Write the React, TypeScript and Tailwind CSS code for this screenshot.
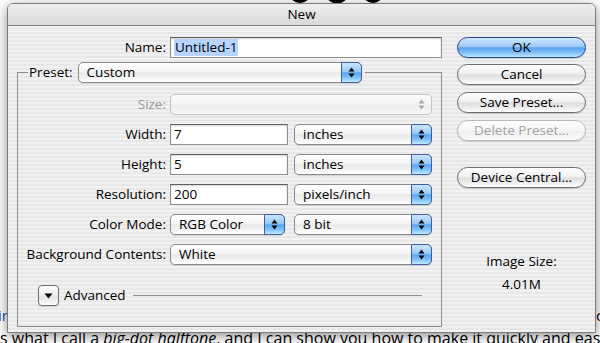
import React from "react";

const Arrows = ({ color = "#000" }: { color?: string }) => (
  <svg width="7" height="11" viewBox="0 0 7 11" fill={color}>
    <path d="M3.5 0.5L6.5 4.5H0.5Z" />
    <path d="M0.5 6.5H6.5L3.5 10.5Z" />
  </svg>
);

type PopUpProps = { value?: string; className: string; disabled?: boolean };

const PopUp = ({ value = "", className, disabled }: PopUpProps) =>
  disabled ? (
    <div
      className={`flex h-[21px] items-center justify-end rounded-[5px] border border-[#c3c3c3] bg-[linear-gradient(180deg,#fbfbfb_0%,#f2f2f2_50%,#ececec_52%,#f8f8f8_100%)] pr-[6px] ${className}`}
    >
      <Arrows color="#a9a9a9" />
    </div>
  ) : (
    <div
      className={`flex h-[21px] items-stretch rounded-[5px] border border-[#8b8b8b] bg-[linear-gradient(180deg,#ffffff_0%,#f4f4f4_45%,#e9e9e9_52%,#f3f3f3_78%,#ffffff_100%)] shadow-[0_1px_1px_rgba(0,0,0,0.12)] ${className}`}
    >
      <span className="flex-1 truncate pl-[8px] leading-[19px]">{value}</span>
      <span className="-my-px -mr-px flex w-[21px] items-center justify-center rounded-r-[5px] border border-[#3d5fa6] bg-[linear-gradient(180deg,#cde6fc_0%,#97c9f6_45%,#5aa7f1_52%,#7cc0fa_76%,#c2ebff_100%)]">
        <Arrows />
      </span>
    </div>
  );

const Field = ({ className, children }: { className: string; children?: React.ReactNode }) => (
  <div
    className={`flex h-[21px] items-center border border-[#8f8f8f] border-t-[#5f5f5f] bg-white pl-[3px] shadow-[inset_0_1px_2px_rgba(0,0,0,0.18)] ${className}`}
  >
    {children}
  </div>
);

const buttonStyles = {
  normal:
    "border-[#6d6d6d] bg-[linear-gradient(180deg,#fdfdfd_0%,#f1f1f1_45%,#dedede_52%,#ececec_75%,#fdfdfd_100%)] text-black",
  primary:
    "border-[#27478f] bg-[linear-gradient(180deg,#d0e8fd_0%,#9ccbf6_45%,#58a2ef_52%,#7dbcf7_75%,#bde6ff_100%)] text-black",
  disabled:
    "border-[#b9b9b9] bg-[linear-gradient(180deg,#fdfdfd_0%,#f6f6f6_50%,#efefef_52%,#fafafa_100%)] text-[#a3a3a3]",
};

const AquaButton = ({
  label,
  kind = "normal",
  className = "",
}: {
  label: string;
  kind?: keyof typeof buttonStyles;
  className?: string;
}) => (
  <div
    className={`flex h-[21px] items-center justify-center rounded-full border shadow-[0_1px_1px_rgba(0,0,0,0.15)] ${buttonStyles[kind]} ${className}`}
  >
    {label}
  </div>
);

const Row = ({ label, muted, children }: { label: string; muted?: boolean; children: React.ReactNode }) => (
  <div className="flex h-[21px] items-center gap-[4px]">
    <span className={`w-[148px] text-right ${muted ? "text-[#9a9a9a]" : ""}`}>{label}</span>
    {children}
  </div>
);

export default function App() {
  return (
    <div className="relative h-[343px] w-[600px] overflow-hidden bg-white font-['Open_Sans',sans-serif] text-[13.5px] font-medium text-black">
      {/* page content behind the dialog */}
      <svg className="absolute left-0 top-0" width="600" height="10">
        <ellipse cx="300" cy="-6" rx="10.5" ry="9" fill="#000" />
        <ellipse cx="337" cy="-6" rx="11" ry="9.5" fill="#000" />
        <ellipse cx="373" cy="-6" rx="10" ry="9" fill="#000" />
      </svg>
      <span className="absolute left-[-2px] top-[308px] text-[15px] leading-[15px] font-normal text-[#1f4a9e]">ir</span>
      <span className="absolute left-[596px] top-[308px] text-[15px] leading-[15px] font-normal">c</span>
      <p className="absolute left-0 top-[330px] whitespace-nowrap text-[16px] leading-[16px] font-normal">
        s what I call a <em>big-dot halftone</em>, and I can show you how to make it quickly and eas
      </p>

      {/* dialog */}
      <div className="absolute left-[7px] top-[3px] flex h-[330px] w-[589px] flex-col overflow-hidden rounded-t-[6px] border border-[#7c7c7c] shadow-[0_3px_12px_rgba(0,0,0,0.45)]">
        <div className="h-[22px] shrink-0 border-b border-[#7e7e7e] bg-[linear-gradient(180deg,#ededed,#d9d9d9)] text-center leading-[21px]">
          New
        </div>

        <div className="flex flex-1 gap-[15px] bg-[repeating-linear-gradient(180deg,#f1f1f1_0px,#f1f1f1_2px,#e8e8e8_2px,#e8e8e8_4px)] pl-[9px] pt-[11px]">
          {/* left column */}
          <div className="flex w-[425px] flex-col">
            <div className="flex h-[21px] items-center gap-[4px]">
              <span className="w-[149px] text-right">Name:</span>
              <Field className="w-[272px]">
                <span className="bg-[#b5d5ff] px-px leading-[17px]">Untitled-1</span>
              </Field>
            </div>

            <fieldset className="mt-[4px] h-[265px] border border-[#8e8e8e] px-0 pb-[20px] pt-[11px]">
              <legend className="ml-[10px] pl-px pr-[3px]">
                <div className="flex items-center gap-[5px]">
                  <span>Preset:</span>
                  <PopUp value="Custom" className="w-[284px]" />
                </div>
              </legend>

              <div className="flex flex-col gap-[9px]">
                <Row label="Size:" muted>
                  <PopUp disabled className="w-[262px]" />
                </Row>
                <Row label="Width:">
                  <Field className="w-[118px]">7</Field>
                  <PopUp value="inches" className="ml-[2px] w-[138px]" />
                </Row>
                <Row label="Height:">
                  <Field className="w-[118px]">5</Field>
                  <PopUp value="inches" className="ml-[2px] w-[138px]" />
                </Row>
                <Row label="Resolution:">
                  <Field className="w-[118px]">200</Field>
                  <PopUp value="pixels/inch" className="ml-[2px] w-[138px]" />
                </Row>
                <Row label="Color Mode:">
                  <PopUp value="RGB Color" className="w-[115px]" />
                  <PopUp value="8 bit" className="ml-[5px] w-[138px]" />
                </Row>
                <Row label="Background Contents:">
                  <PopUp value="White" className="w-[262px]" />
                </Row>
              </div>

              <div className="ml-[20px] mr-[19px] mt-[20px] flex h-[21px] items-center">
                <div className="flex h-[21px] w-[21px] items-center justify-center rounded-[4px] border border-[#707070] bg-[linear-gradient(180deg,#fdfdfd_0%,#efefef_48%,#e0e0e0_52%,#fbfbfb_100%)] shadow-[0_1px_1px_rgba(0,0,0,0.15)]">
                  <svg width="9" height="6" viewBox="0 0 9 6">
                    <path d="M0.5 0.5H8.5L4.5 5.5Z" fill="#000" />
                  </svg>
                </div>
                <span className="ml-[5px]">Advanced</span>
                <div className="ml-[7px] h-px flex-1 bg-[#8e8e8e]" />
              </div>
            </fieldset>
          </div>

          {/* right column */}
          <div className="flex w-[129px] flex-col">
            <AquaButton label="OK" kind="primary" />
            <AquaButton label="Cancel" className="mt-[6px]" />
            <AquaButton label="Save Preset..." className="mt-[7px]" />
            <AquaButton label="Delete Preset..." kind="disabled" className="mt-[7px]" />
            <AquaButton label="Device Central..." className="mt-[26px]" />
            <div className="mt-[64px] text-center leading-[18px]">Image Size:</div>
            <div className="mt-[5px] text-center leading-[18px]">4.01M</div>
          </div>
        </div>
      </div>
    </div>
  );
}
